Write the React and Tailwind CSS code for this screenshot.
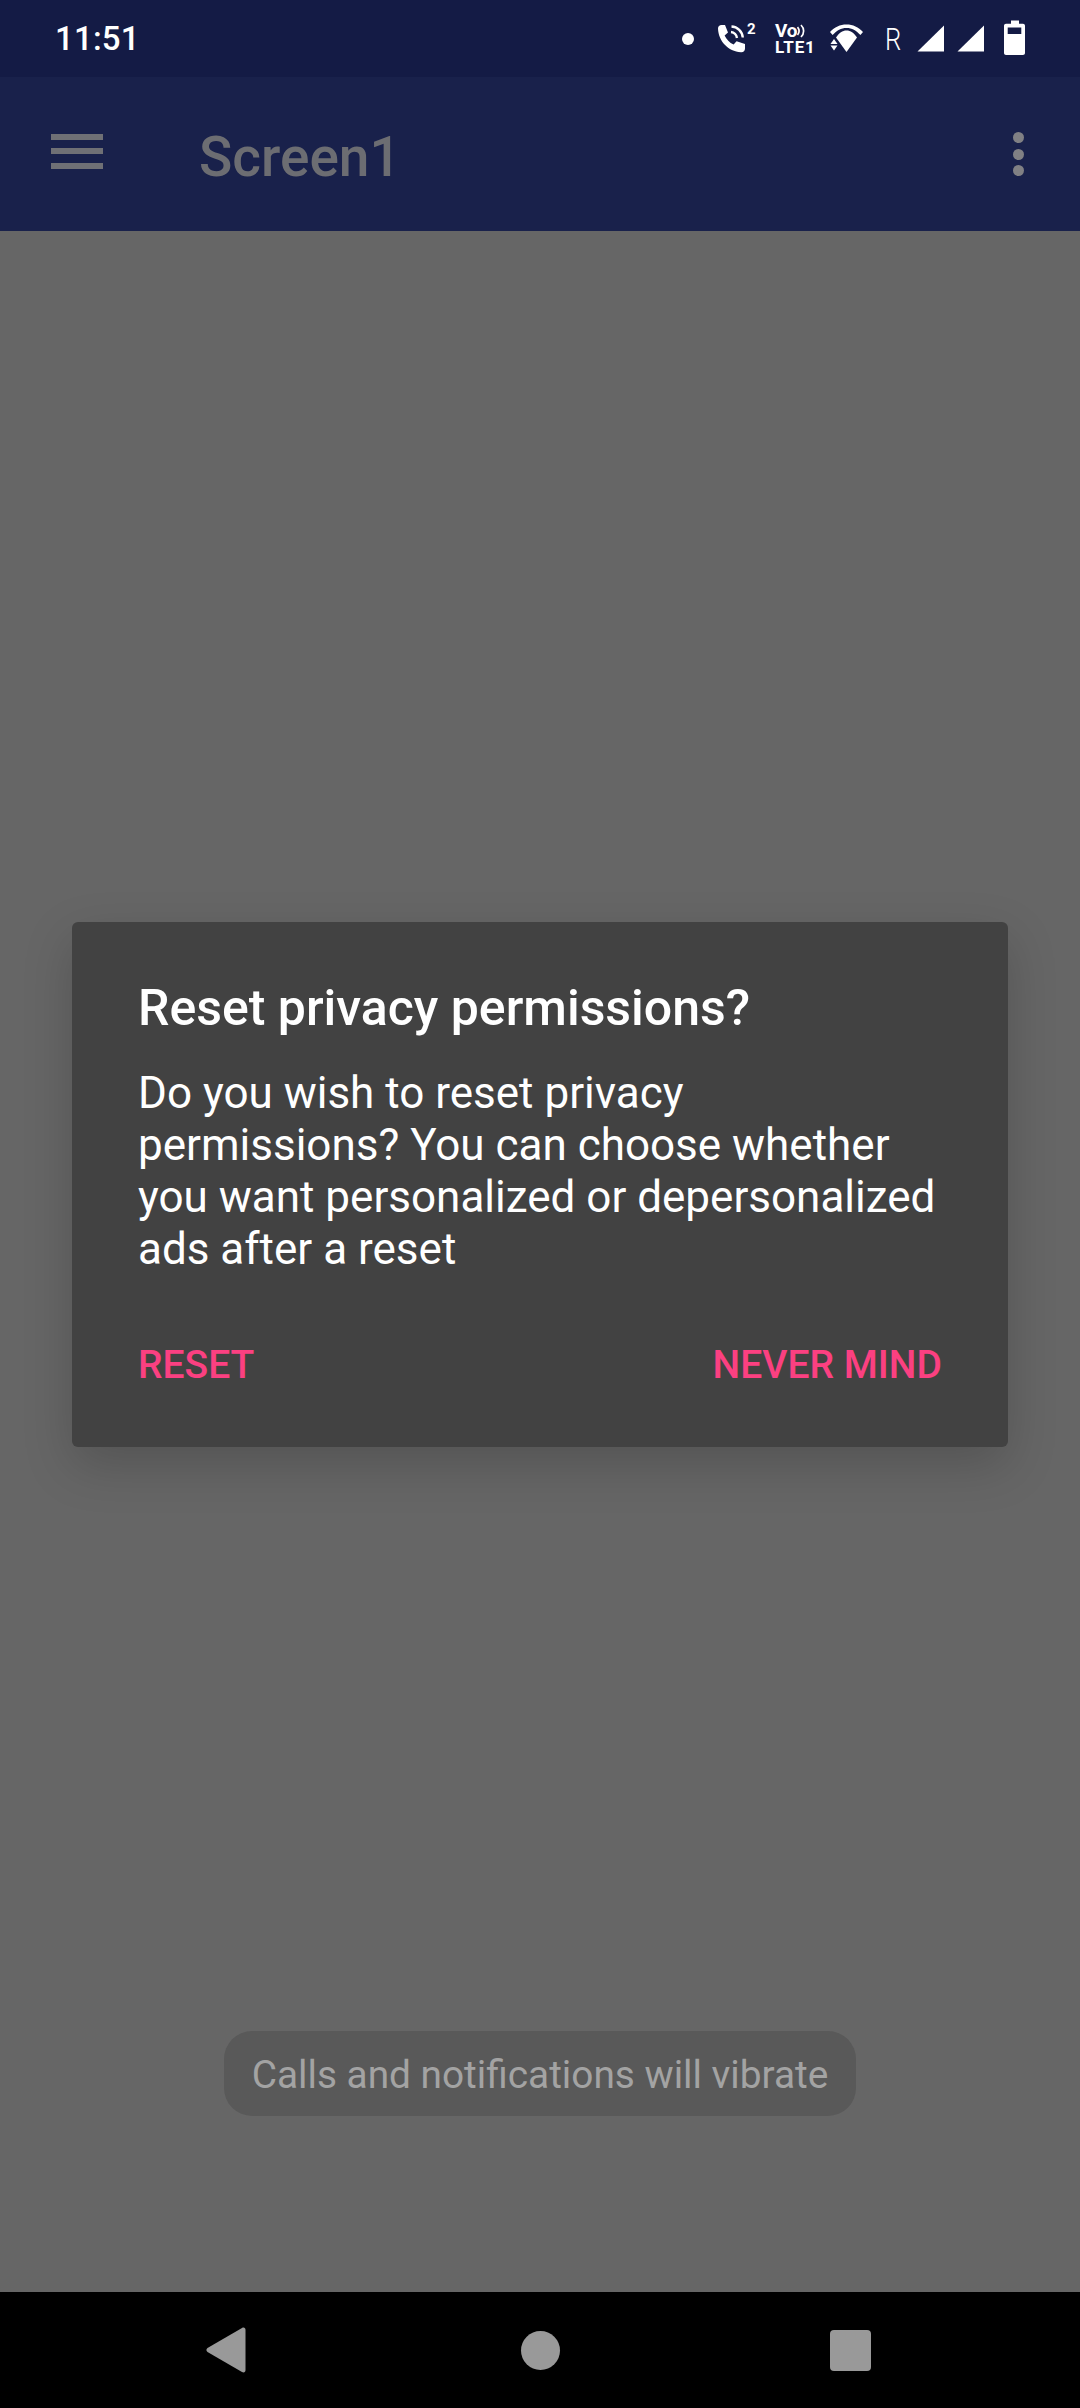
import React from "react";

function Phone() {
  return (
    <svg width="30" height="30" viewBox="0 0 30 30" className="block" fill="none">
      <path d="M1 4.5 C1 2.5 2.5 1 4.5 1 L8 1 L11 8.5 L7.6 11.5 C9.5 15.5 12.5 18.6 16.6 20.6 L19.6 17.2 L28 20 L28 24.5 C28 26.8 26.4 28.4 24 28.2 C11 27.2 1.6 17.5 1 4.5 Z" fill="white" />
      <path d="M14 8 C17 8.3 19.6 10.8 20 14" stroke="white" strokeWidth="2.4" />
      <path d="M14.5 2.5 C20.5 2.8 25.3 7.5 25.8 13.5" stroke="white" strokeWidth="2.4" />
    </svg>
  );
}

function Wifi() {
  return (
    <svg width="33" height="29" viewBox="0 0 33 29" className="block" fill="white">
      <path d="M16.5 0.5 C10 0.5 4.6 3 0 8 L2.6 11 C6.8 6.6 11 4 16.5 4 C22 4 26.2 6.6 30.4 11 L33 8 C28.4 3 23 0.5 16.5 0.5 Z" />
      <path d="M6 13.5 C9 8.6 12.5 6.4 16.5 6.4 C20.5 6.4 24 8.6 27 13.5 L16.5 28 Z" />
      <path d="M0.5 20 L4 15 L7.5 20 Z" />
      <path d="M0.5 21.5 L7.5 21.5 L4 26.5 Z" />
    </svg>
  );
}

function Signal() {
  return (
    <svg width="27" height="27" viewBox="0 0 27 27" className="block" fill="white">
      <path d="M27 0.5 V26.5 H0.5 Z" />
    </svg>
  );
}

function Battery() {
  return (
    <svg width="21" height="35" viewBox="0 0 21 35" className="block" fill="white">
      <path fillRule="evenodd" d="M7 0.5 H15 V3.8 H19 C20.1 3.8 21 4.7 21 5.8 V33 C21 34.1 20.1 35 19 35 H2 C0.9 35 0 34.1 0 33 V5.8 C0 4.7 0.9 3.8 2 3.8 H7 Z M3.7 7.5 V14 H17.3 V7.5 Z" />
    </svg>
  );
}

export default function App() {
  return (
    <div className="flex h-[2408px] w-[1080px] flex-col overflow-hidden bg-[#666666] font-['Roboto',sans-serif]">
      <div className="flex h-[77px] shrink-0 items-center bg-[#141b45] pl-[55px]">
        <span className="text-[33px] leading-[38px] font-medium tracking-[0.2px] text-white">11:51</span>
        <div className="ml-auto flex h-full items-center pr-[55px] text-white">
          <span className="h-[12px] w-[12px] rounded-full bg-white" />
          <div className="relative mr-[21px] ml-[23px] h-[30px] w-[37px]">
            <Phone />
            <span className="absolute top-[-2px] left-[30px] text-[15px] leading-[15px] font-bold">2</span>
          </div>
          <div className="flex w-[37px] flex-col items-start">
            <div className="flex h-[14px] items-center">
              <span className="text-[19px] leading-[14px] font-bold tracking-[-0.3px]">Vo</span>
              <svg width="9" height="14" viewBox="0 0 9 14" fill="none" stroke="white" strokeWidth="1.7">
                <path d="M0.5 3 C2.5 5.5 2.5 8.5 0.5 11" />
                <path d="M4 1 C7.5 4.5 7.5 9.5 4 13" />
              </svg>
            </div>
            <span className="mt-[3px] text-[17px] leading-[13px] font-bold tracking-[0.9px]">LTE1</span>
          </div>
          <div className="ml-[18px]">
            <Wifi />
          </div>
          <span className="ml-[22px] w-[15px] origin-left scale-x-80 text-[32px] leading-[34px] font-light">R</span>
          <div className="ml-[17px]">
            <Signal />
          </div>
          <div className="ml-[13px]">
            <Signal />
          </div>
          <div className="mb-[2px] ml-[20px]">
            <Battery />
          </div>
        </div>
      </div>

      <div className="flex h-[154px] shrink-0 items-center bg-[#19214b] pr-[56px] pl-[51px]">
        <div className="mb-[6px] flex w-[52px] flex-col gap-[8.5px]">
          <span className="h-[6px] bg-[#6f7075]" />
          <span className="h-[6px] bg-[#6f7075]" />
          <span className="h-[6px] bg-[#6f7075]" />
        </div>
        <span className="mt-[6px] ml-[96px] text-[55px] leading-[64px] font-medium text-[#6c6d72]">Screen1</span>
        <div className="ml-auto flex flex-col gap-[5.5px]">
          <span className="h-[11px] w-[11px] rounded-full bg-[#808084]" />
          <span className="h-[11px] w-[11px] rounded-full bg-[#808084]" />
          <span className="h-[11px] w-[11px] rounded-full bg-[#808084]" />
        </div>
      </div>

      <div className="flex min-h-0 flex-1 flex-col items-center bg-[#666666] pt-[691px]">
        <div className="h-[525px] w-[936px] rounded-[6px] bg-[#424242] px-[66px] pt-[58px] shadow-[0_18px_50px_rgba(0,0,0,0.18)]">
          <h1 className="text-[50px] leading-[56px] font-medium text-white">Reset privacy permissions?</h1>
          <p className="mt-[31px] text-[44px] leading-[52px] text-white">
            Do you wish to reset privacy permissions? You can choose whether you want personalized or depersonalized ads after a reset
          </p>
          <div className="mt-[67px] flex justify-between text-[39px] leading-[46px] font-medium text-[#fb4081]">
            <span>RESET</span>
            <span>NEVER MIND</span>
          </div>
        </div>
        <div className="mt-[584px] flex h-[85px] w-[632px] items-center justify-center rounded-[28px] bg-[#595959] pt-[3px] text-[38.8px] text-[#a3a3a3]">
          Calls and notifications will vibrate
        </div>
      </div>

      <div className="flex h-[116px] shrink-0 items-center bg-black pl-[206px]">
        <svg width="40" height="46" viewBox="0 0 40 46" className="block" fill="#999999">
          <path d="M36 1 C38 0 39.5 1 39.5 3 V43 C39.5 45 38 46 36 45 L1.5 25 C0 24 0 22 1.5 21 Z" />
        </svg>
        <span className="ml-[275px] h-[39px] w-[39px] rounded-full bg-[#999999]" />
        <span className="ml-[270px] h-[41px] w-[41px] rounded-[4px] bg-[#999999]" />
      </div>
    </div>
  );
}
